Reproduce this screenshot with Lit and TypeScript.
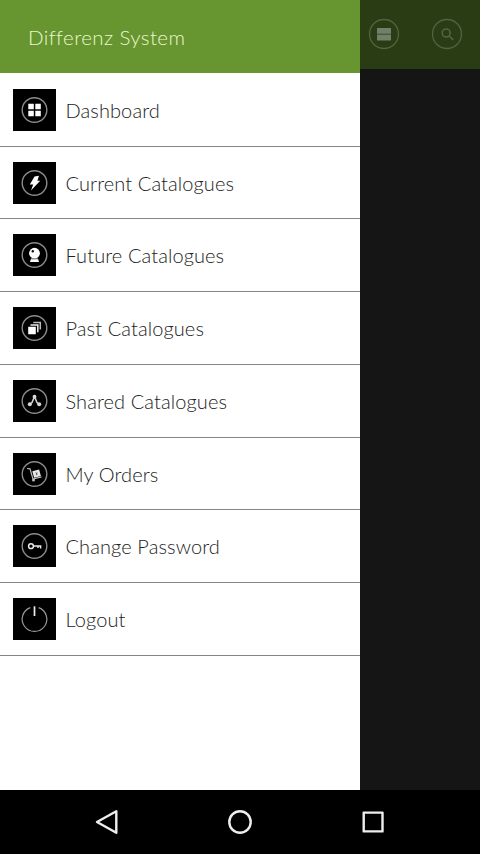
import { LitElement, html, svg, css } from "lit";
import { customElement } from "lit/decorators.js";

const ring = svg`<circle cx="21.500" cy="21" r="12.300" fill="none" stroke="#8c8c8c" stroke-width="1.400"/>`;

const rows = [
  { label: "Dashboard", icon: svg`${ring}<path fill="#fff" d="M15.300 14.800h5.500v5.400h-5.500zM22.300 14.800h5.500v5.400h-5.500zM15.300 21.800h5.500v5.400h-5.500zM22.300 21.800h5.500v5.400h-5.500z"/>` },
  { label: "Current Catalogues", icon: svg`${ring}<path fill="#fff" d="M21.500 14.500l4.500-.7-1.600 5h2.800L18 28.500l2.200-5.900h-3.400z"/>` },
  { label: "Future Catalogues", icon: svg`${ring}<circle cx="21.500" cy="19.200" r="5.400" fill="#fff"/><path fill="#fff" d="M18 24.500h7l1 3.500h-9z"/><path stroke="#555" stroke-width=".6" d="M18 25h7"/><circle cx="19.800" cy="17.300" r="1.200" fill="#111"/>` },
  { label: "Past Catalogues", icon: svg`${ring}<path fill="#fff" d="M15.200 19.800h7.600v7.400h-7.600z"/><path fill="none" stroke="#eee" stroke-width="1.500" d="M17.500 18h7.300v7.300"/><path fill="none" stroke="#bbb" stroke-width="1.500" d="M20.300 15.500h7v7"/>` },
  { label: "Shared Catalogues", icon: svg`${ring}<path fill="none" stroke="#d0d0d0" stroke-width="1.600" d="M16.600 24.500l2.400-2 2.500-6 2.500 6 2.400 2"/><g fill="#d8d8d8"><circle cx="16.800" cy="24.300" r="2"/><circle cx="21.500" cy="16.700" r="1.900"/><circle cx="26.200" cy="24.300" r="2"/></g>` },
  { label: "My Orders", icon: svg`${ring}<path fill="none" stroke="#bbb" stroke-width="1.200" d="M14 15.500l3 .3 3 10.300 8.500-2.300"/><path fill="#e8e8e8" d="M19.300 18.300l6.800-1.800 1.800 6.400-6.800 1.800z"/><path stroke="#555" stroke-width=".8" d="M22.500 19.800l2.200 1.600M24 19.300l-.8 3"/><circle cx="20.500" cy="27" r="1.500" fill="#bbb"/>` },
  { label: "Change Password", icon: svg`${ring}<circle cx="18" cy="21.200" r="2.400" fill="none" stroke="#e8e8e8" stroke-width="1.500"/><path fill="none" stroke="#e8e8e8" stroke-width="1.500" d="M20.400 21h7.200v2.500M25 21v2"/>` },
  { label: "Logout", icon: svg`<path fill="none" stroke="#999" stroke-width="1.200" d="M17.300 9.600a12.300 12.300 0 1 0 8.400 0"/><path stroke="#eee" stroke-width="1.700" d="M21.500 8.300v9.700"/>` },
];

@customElement("app-root")
export class AppRoot extends LitElement {
  static styles = css`
    :host { display: flex; flex-direction: column; width: 480px; height: 854px; background: #000; font-family: Lato, sans-serif; font-weight: 300; }
    .main { display: flex; height: 790px; flex: none; }
    .drawer { width: 360px; background: #fff; }
    .head { height: 73px; box-sizing: border-box; padding: 0 0 0 28px; display: flex; align-items: center; background: #67952f; color: #e9f8cf; font-size: 20.500px; letter-spacing: 0.400px; }
    .list { padding-top: 0.900px; }
    .row { height: 72.750px; box-sizing: border-box; border-bottom: 1px solid #858585; display: flex; align-items: center; padding: 0 0 0 13px; }
    .icon { width: 43px; height: 42px; background: #000; flex: none; }
    .label { font-size: 20px; letter-spacing: 0.100px; margin-left: 9.500px; color: #222; }
    .rest { flex: 1; background: #151515; }
    .bar { height: 69px; background: #293c13; display: flex; justify-content: space-between; align-items: center; padding: 0 17px 1px 8px; box-sizing: border-box; }
    .tool { width: 32px; height: 32px; }
    .nav { flex: 1; display: flex; }
    .nav svg { width: 480px; height: 64px; }
  `;

  render() {
    return html`
      <div class="main">
        <div class="drawer">
          <div class="head">Differenz System</div>
          <div class="list">
            ${rows.map((r) => html`<div class="row"><svg class="icon" viewBox="0 0 43 42">${r.icon}</svg><span class="label">${r.label}</span></div>`)}
          </div>
        </div>
        <div class="rest">
          <div class="bar">
            <svg class="tool" viewBox="0 0 32 32"><circle cx="16" cy="16" r="14.500" fill="none" stroke="#52643f" stroke-width="1.300"/><path fill="#71806a" d="M9 10h14v5.800H9zM9 16.600h14v5.800H9z"/></svg>
            <svg class="tool" viewBox="0 0 32 32"><g fill="none" stroke="#52643f"><circle cx="16" cy="16" r="14.500" stroke-width="1.300"/><circle cx="15.200" cy="15" r="4" stroke-width="1.600"/><path stroke-width="1.600" d="M18.200 18l4 3.800"/></g></svg>
          </div>
        </div>
      </div>
      <div class="nav">
        <svg viewBox="0 0 480 64"><g fill="none" stroke="#eee" stroke-width="2.400" stroke-linejoin="round"><path d="M116.300 21.200v21.600L97 32z"/><circle cx="240" cy="32" r="10.700"/><path d="M363.700 22.600h18.800v18.800h-18.800z"/></g></svg>
      </div>`;
  }
}
